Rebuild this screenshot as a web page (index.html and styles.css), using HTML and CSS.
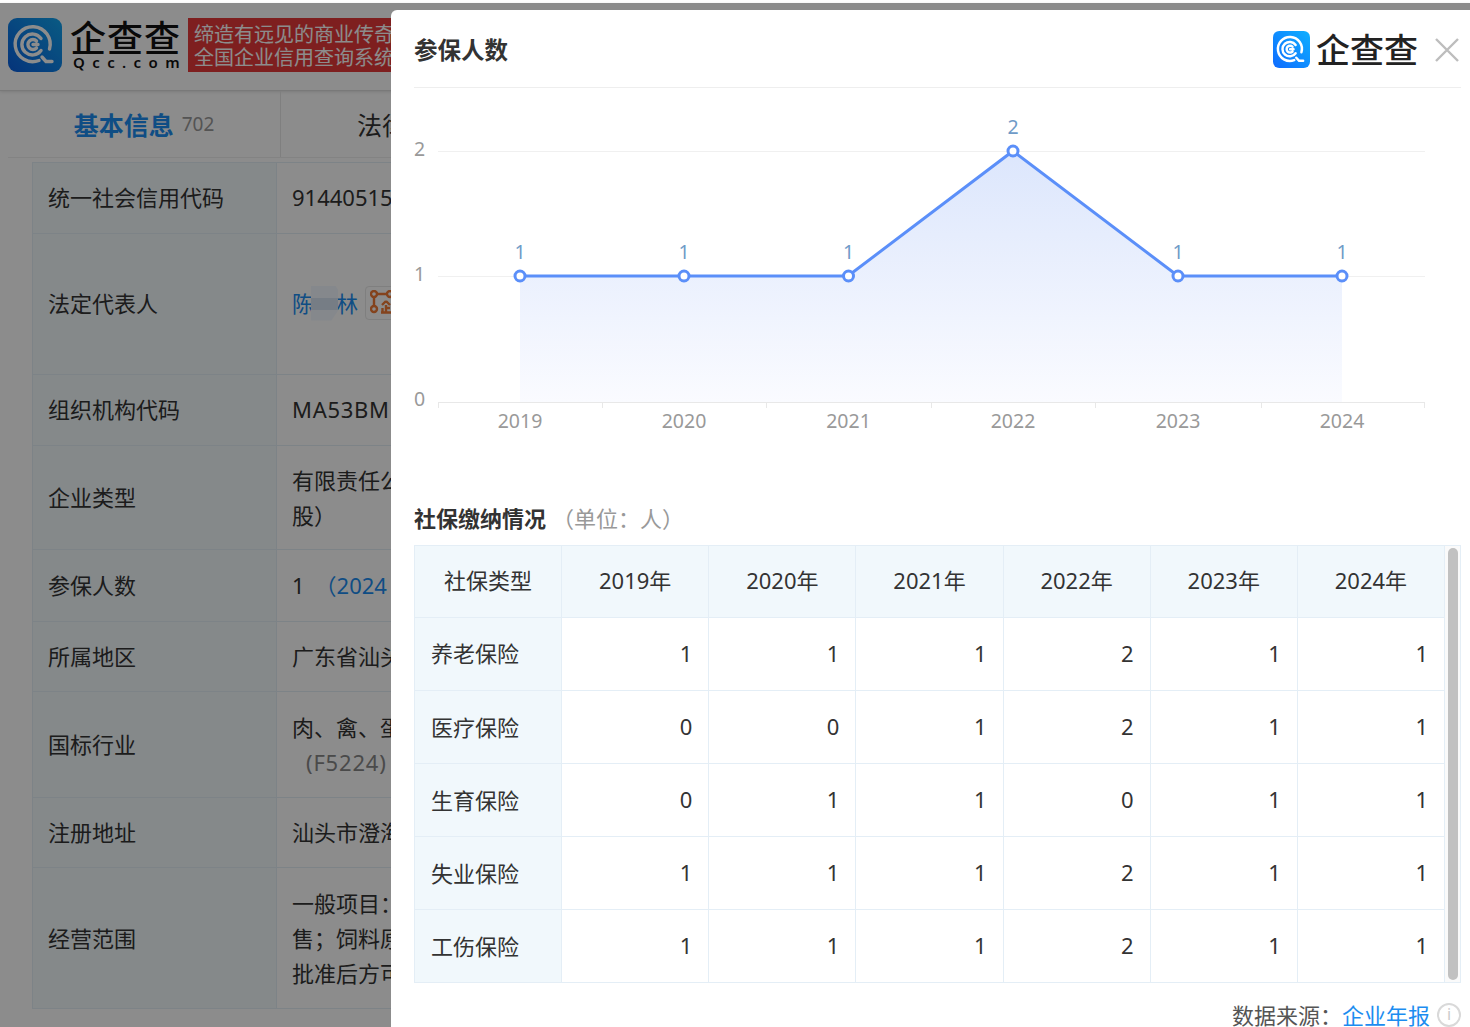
FILE: index.html
```html
<!DOCTYPE html>
<html lang="zh-CN">
<head>
  <meta charset="UTF-8" />
  <title>参保人数</title>
  <link rel="stylesheet" href="styles.css">
</head>
<body>
  <div class="page">
    <!-- Site header -->
    <header class="site-head">
      <svg class="logo-icon" viewBox="0 0 54 54">
        <defs>
          <linearGradient id="logoDim" x1="0" y1="1" x2="1" y2="0">
            <stop offset="0" stop-color="#0a5fe0"/>
            <stop offset="1" stop-color="#12a5ef"/>
          </linearGradient>
        </defs>
        <rect width="54" height="54" rx="9" fill="url(#logoDim)"/>
        <g fill="none" stroke="#fff" stroke-width="3.4" stroke-linecap="round">
          <path d="M41.5 31 A17.500 17.500 0 1 0 31 42.500"/>
          <path d="M34 39 L38 43.500 H44"/>
          <path d="M33 20.500 A10.500 10.500 0 1 0 33 32.500"/>
          <path d="M28.500 23 A5 5 0 1 0 28.500 30 M25 26.500 H30"/>
        </g>
      </svg>
      <div class="brand">
        <div class="brand-name">企查查</div>
        <div class="brand-url">Qcc.com</div>
      </div>
      <div class="slogan">
        <div>缔造有远见的商业传奇</div>
        <div>全国企业信用查询系统</div>
      </div>
    </header>

    <!-- Tabs -->
    <nav class="tabs">
      <div class="tab tab-active"><b>基本信息</b><span class="tab-count">702</span></div>
      <div class="tab tab-next">法律</div>
    </nav>

    <!-- Company info behind the dialog -->
    <table class="info">
      <tr class="h71"><th>统一社会信用代码</th><td>91440515</td></tr>
      <tr class="h141">
        <th>法定代表人</th>
        <td>
          <span class="person">
            <span class="link">陈</span><span class="gap"></span><span class="link">林</span>
            <i class="mask"></i>
            <span class="chip">
              <svg class="chip-icon" viewBox="0 0 26 26">
                <g fill="none" stroke="#f07a35" stroke-width="2.400">
                  <circle cx="4" cy="4" r="3"/>
                  <circle cx="20" cy="4" r="3"/>
                  <circle cx="4" cy="19" r="3"/>
                  <path d="M7 4 H17 M4 7 V16"/>
                  <path d="M16 11 L12 15 M16 11 L20 15 M11 22.500 H21 M16 15 V22 M16 18 H20 M12.500 18 V22"/>
                </g>
              </svg>
            </span>
          </span>
        </td>
      </tr>
      <tr class="h71"><th>组织机构代码</th><td><span class="code">MA53BM</span></td></tr>
      <tr class="h104"><th>企业类型</th><td>有限责任公<br>股）</td></tr>
      <tr class="h72"><th>参保人数</th><td>1<span class="link year">（2024</span></td></tr>
      <tr class="h70"><th>所属地区</th><td>广东省汕头</td></tr>
      <tr class="h106"><th>国标行业</th><td>肉、禽、蛋<br><span class="muted">(F5224)</span></td></tr>
      <tr class="h70"><th>注册地址</th><td>汕头市澄海</td></tr>
      <tr class="h141"><th>经营范围</th><td>一般项目：<br>售；饲料原<br>批准后方可</td></tr>
    </table>

    <div class="overlay"></div>

    <!-- Dialog -->
    <section class="dialog">
      <div class="dialog-head">
        <h2>参保人数</h2>
        <div class="dialog-brand">
          <svg class="dialog-icon" viewBox="0 0 54 54">
            <defs>
              <linearGradient id="logoLit" x1="0" y1="1" x2="1" y2="0">
                <stop offset="0" stop-color="#0f6bff"/>
                <stop offset="1" stop-color="#0fb0ff"/>
              </linearGradient>
            </defs>
            <rect width="54" height="54" rx="9" fill="url(#logoLit)"/>
            <g fill="none" stroke="#fff" stroke-width="3.6" stroke-linecap="round">
              <path d="M41.5 31 A17.500 17.500 0 1 0 31 42.500"/>
              <path d="M34 39 L38 43.500 H44"/>
              <path d="M33 20.500 A10.500 10.500 0 1 0 33 32.500"/>
              <path d="M28.500 23 A5 5 0 1 0 28.500 30 M25 26.500 H30"/>
            </g>
          </svg>
          <span class="dialog-name">企查查</span>
        </div>
        <svg class="close" viewBox="0 0 24 24">
          <path d="M1 1 L23 23 M23 1 L1 23" stroke="#bdbdbd" stroke-width="2.400" fill="none"/>
        </svg>
      </div>

      <svg class="chart" viewBox="0 0 1047 362" width="1047" height="362">
        <defs>
          <linearGradient id="areaFill" x1="0" y1="0" x2="0" y2="1">
            <stop offset="0" stop-color="#dce6fc"/>
            <stop offset="1" stop-color="#fafbff"/>
          </linearGradient>
        </defs>
        <g stroke="#f0f0f0" stroke-width="1">
          <path d="M24 63.500 H1011 M24 188.500 H1011"/>
        </g>
        <path d="M106 188 H434 L599 63 L764 188 H928 V314 H106 Z" fill="url(#areaFill)"/>
        <path d="M24 314.500 H1011 M24.500 314 V320 M188.500 314 V320 M352.500 314 V320 M517.500 314 V320 M681.500 314 V320 M847.500 314 V320 M1010.500 314 V320" stroke="#e8e8e8" fill="none"/>
        <path d="M106 188 H434 L599 63 L764 188 H928" fill="none" stroke="#5b8ff9" stroke-width="3"/>
        <g fill="#fff" stroke="#5b8ff9" stroke-width="3">
          <circle cx="106" cy="188" r="5"/>
          <circle cx="270" cy="188" r="5"/>
          <circle cx="434.500" cy="188" r="5"/>
          <circle cx="599" cy="63" r="5"/>
          <circle cx="764" cy="188" r="5"/>
          <circle cx="928" cy="188" r="5"/>
        </g>
        <g class="chart-value" text-anchor="middle">
          <text x="106" y="171">1</text>
          <text x="270" y="171">1</text>
          <text x="434.500" y="171">1</text>
          <text x="599" y="46">2</text>
          <text x="764" y="171">1</text>
          <text x="928" y="171">1</text>
        </g>
        <g class="chart-axis">
          <text x="0" y="68">2</text>
          <text x="0" y="193">1</text>
          <text x="0" y="318">0</text>
        </g>
        <g class="chart-axis" text-anchor="middle">
          <text x="106" y="340">2019</text>
          <text x="270" y="340">2020</text>
          <text x="434.500" y="340">2021</text>
          <text x="599" y="340">2022</text>
          <text x="764" y="340">2023</text>
          <text x="928" y="340">2024</text>
        </g>
      </svg>

      <h3 class="sub-title">社保缴纳情况<span class="unit">（单位：人）</span></h3>

      <div class="data-wrap">
        <table class="data">
          <thead>
            <tr><th>社保类型</th><th>2019年</th><th>2020年</th><th>2021年</th><th>2022年</th><th>2023年</th><th>2024年</th></tr>
          </thead>
          <tbody>
            <tr><th>养老保险</th><td>1</td><td>1</td><td>1</td><td>2</td><td>1</td><td>1</td></tr>
            <tr><th>医疗保险</th><td>0</td><td>0</td><td>1</td><td>2</td><td>1</td><td>1</td></tr>
            <tr><th>生育保险</th><td>0</td><td>1</td><td>1</td><td>0</td><td>1</td><td>1</td></tr>
            <tr><th>失业保险</th><td>1</td><td>1</td><td>1</td><td>2</td><td>1</td><td>1</td></tr>
            <tr><th>工伤保险</th><td>1</td><td>1</td><td>1</td><td>2</td><td>1</td><td>1</td></tr>
          </tbody>
        </table>
        <div class="scroll-track"><div class="scroll-thumb"></div></div>
      </div>

      <div class="source">
        <span>数据来源：</span><span class="source-link">企业年报</span>
        <span class="info-icon">i</span>
      </div>
    </section>
  </div>
</body>
</html>
```

FILE: styles.css
```css
* {
  box-sizing: border-box;
}

html, body {
  margin: 0;
  height: 100%;
  overflow: hidden;
}

body {
  font-family: "Noto Sans", "Noto Sans CJK SC", sans-serif;
  font-size: 22px;
  color: #333;
  background: #fff;
}

.page {
  position: relative;
  height: 1027px;
  overflow: hidden;
  padding-top: 3px;
}

/* Header */
.site-head {
  display: flex;
  align-items: flex-start;
  height: 88px;
  padding: 15px 0 0 8px;
  border-bottom: 1px solid #ddd;
  box-shadow: 0 1px 3px rgba(0,0,0,0.12);
}

.logo-icon {
  width: 54px;
  height: 54px;
  flex: none;
}

.brand {
  width: 118px;
  margin-left: 8px;
  color: #111;
}

.brand-name {
  font-family: "Noto Sans CJK SC", sans-serif;
  font-size: 36px;
  font-weight: 500;
  line-height: 37px;
  letter-spacing: 1px;
  white-space: nowrap;
}

.brand-url {
  font-size: 15px;
  line-height: 15px;
  letter-spacing: 7.400px;
  font-weight: 600;
  margin-left: 3px;
  white-space: nowrap;
}

.slogan {
  width: 203px;
  height: 54px;
  padding: 4.500px 6px;
  background: #e63a3a;
  color: #fff;
  font-size: 20px;
  line-height: 23px;
  white-space: nowrap;
  overflow: hidden;
}

/* Tabs */
.tabs {
  display: flex;
  height: 67px;
  margin-left: 8px;
  border-bottom: 1px solid #eee;
}

.tab {
  display: flex;
  flex: none;
  align-items: center;
  justify-content: center;
  width: 273px;
  font-size: 25px;
  border-right: 1px solid #e8e8e8;
  white-space: nowrap;
}

.tab-next {
  justify-content: flex-start;
  padding-left: 76px;
}

.tab-active b {
  color: #1c8df0;
}

.tab-count {
  margin-left: 8px;
  font-size: 19px;
  color: #999;
}

/* Info table */
.info {
  margin: 4px 0 0 32px;
  width: 400px;
  border-collapse: collapse;
  table-layout: fixed;
  line-height: 35px;
}

.info th, .info td {
  border: 1px solid #e4eef6;
  padding: 0 0 2px 15px;
  text-align: left;
  font-weight: 400;
  white-space: nowrap;
  overflow: hidden;
}

.info tr:nth-child(n+4) > * {
  padding-bottom: 0;
}

.info th {
  width: 244px;
  background: #f2f9fc;
}

.h70 { height: 70px; }
.h71 { height: 71px; }
.h72 { height: 72px; }
.h104 { height: 104px; }
.h106 { height: 106px; }
.h141 { height: 141px; }

.link {
  color: #1c8df0;
}

.year {
  margin-left: 10px;
}

.code {
  letter-spacing: 0.700px;
}

.muted {
  margin-left: 14px;
  letter-spacing: 0.800px;
  color: #888;
}

.person {
  position: relative;
  display: inline-flex;
  align-items: center;
}

.gap {
  width: 22px;
}

/* blurred-out character in the name */
.mask {
  position: absolute;
  top: 0;
  left: 19px;
  width: 27px;
  height: 35px;
  background: linear-gradient(#f2f7ff 0 34%, #d8e3f2 34% 68%, #f2f7ff 68%);
  clip-path: polygon(0 0, 90% 0, 100% 12%, 100% 72%, 75% 100%, 0 100%);
}

.chip {
  display: flex;
  align-items: center;
  justify-content: center;
  flex: none;
  margin-left: 7px;
  width: 36px;
  height: 34px;
  border: 1px solid #e8e8e8;
  border-radius: 4px;
}

.chip-icon {
  width: 26px;
  height: 26px;
}

.overlay {
  position: absolute;
  top: 3px;
  left: 0;
  right: 0;
  bottom: 0;
  background: rgba(0,0,0,0.45);
}

/* Dialog */
.dialog {
  position: absolute;
  top: 10px;
  left: 391px;
  right: 0;
  bottom: 0;
  padding: 0 9px 0 23px;
  background: #fff;
  border-radius: 6px 0 0 0;
}

.dialog-head {
  display: flex;
  align-items: center;
  height: 78px;
  border-bottom: 1px solid #eee;
}

.dialog-head h2 {
  margin: 0;
  font-size: 23.500px;
  font-weight: 700;
  color: #333;
}

.dialog-brand {
  display: flex;
  align-items: center;
  margin-left: auto;
}

.dialog-icon {
  width: 37px;
  height: 37px;
  margin-top: 2px;
}

.dialog-name {
  margin-left: 6px;
  font-family: "Noto Sans CJK SC", sans-serif;
  font-size: 34px;
  font-weight: 500;
  color: #222;
}

.close {
  width: 24px;
  height: 24px;
  margin: 2px 2px 0 17px;
}

.chart {
  display: block;
}

.chart-value text {
  font-size: 19.500px;
  fill: #6f9bc8;
}

.chart-axis text {
  font-size: 19.500px;
  fill: #999;
}

.sub-title {
  display: flex;
  align-items: center;
  height: 36px;
  margin: 49px 0 0;
  font-size: 22px;
  font-weight: 700;
  color: #333;
}

.unit {
  margin-left: 6px;
  font-weight: 400;
  color: #999;
}

/* Data table */
.data-wrap {
  display: flex;
  margin-top: 10px;
  border-top: 1px solid #e4eef6;
  border-bottom: 1px solid #e4eef6;
}

.data {
  width: 1031px;
  flex: none;
  border-collapse: collapse;
  table-layout: fixed;
}

.data th, .data td {
  height: 73px;
  border: 1px solid #e4eef6;
  font-weight: 400;
  padding: 0 16px 2px;
}

.data tr:first-child th {
  height: 71px;
  padding-bottom: 4px;
  border-top: none;
}

.data tbody tr:last-child > * {
  border-bottom: none;
}

.data th {
  background: #f1f8fc;
  text-align: center;
}

.data tbody th {
  text-align: left;
}

.data td {
  text-align: right;
}

.scroll-track {
  flex: 1;
  padding: 2px 2px 2px 3px;
  border-right: 1px solid #e4eef6;
  background: #fafafa;
}

.scroll-thumb {
  height: 100%;
  border-radius: 5px;
  background: #c1c1c1;
}

.source {
  display: flex;
  align-items: center;
  justify-content: flex-end;
  margin-top: 20px;
  line-height: 24px;
  color: #555;
}

.source-link {
  color: #1c8df0;
}

.info-icon {
  width: 24px;
  height: 24px;
  margin-left: 7px;
  border: 2px solid #d9d9d9;
  border-radius: 50%;
  font-size: 16px;
  line-height: 19px;
  text-align: center;
  color: #ccc;
}
```
